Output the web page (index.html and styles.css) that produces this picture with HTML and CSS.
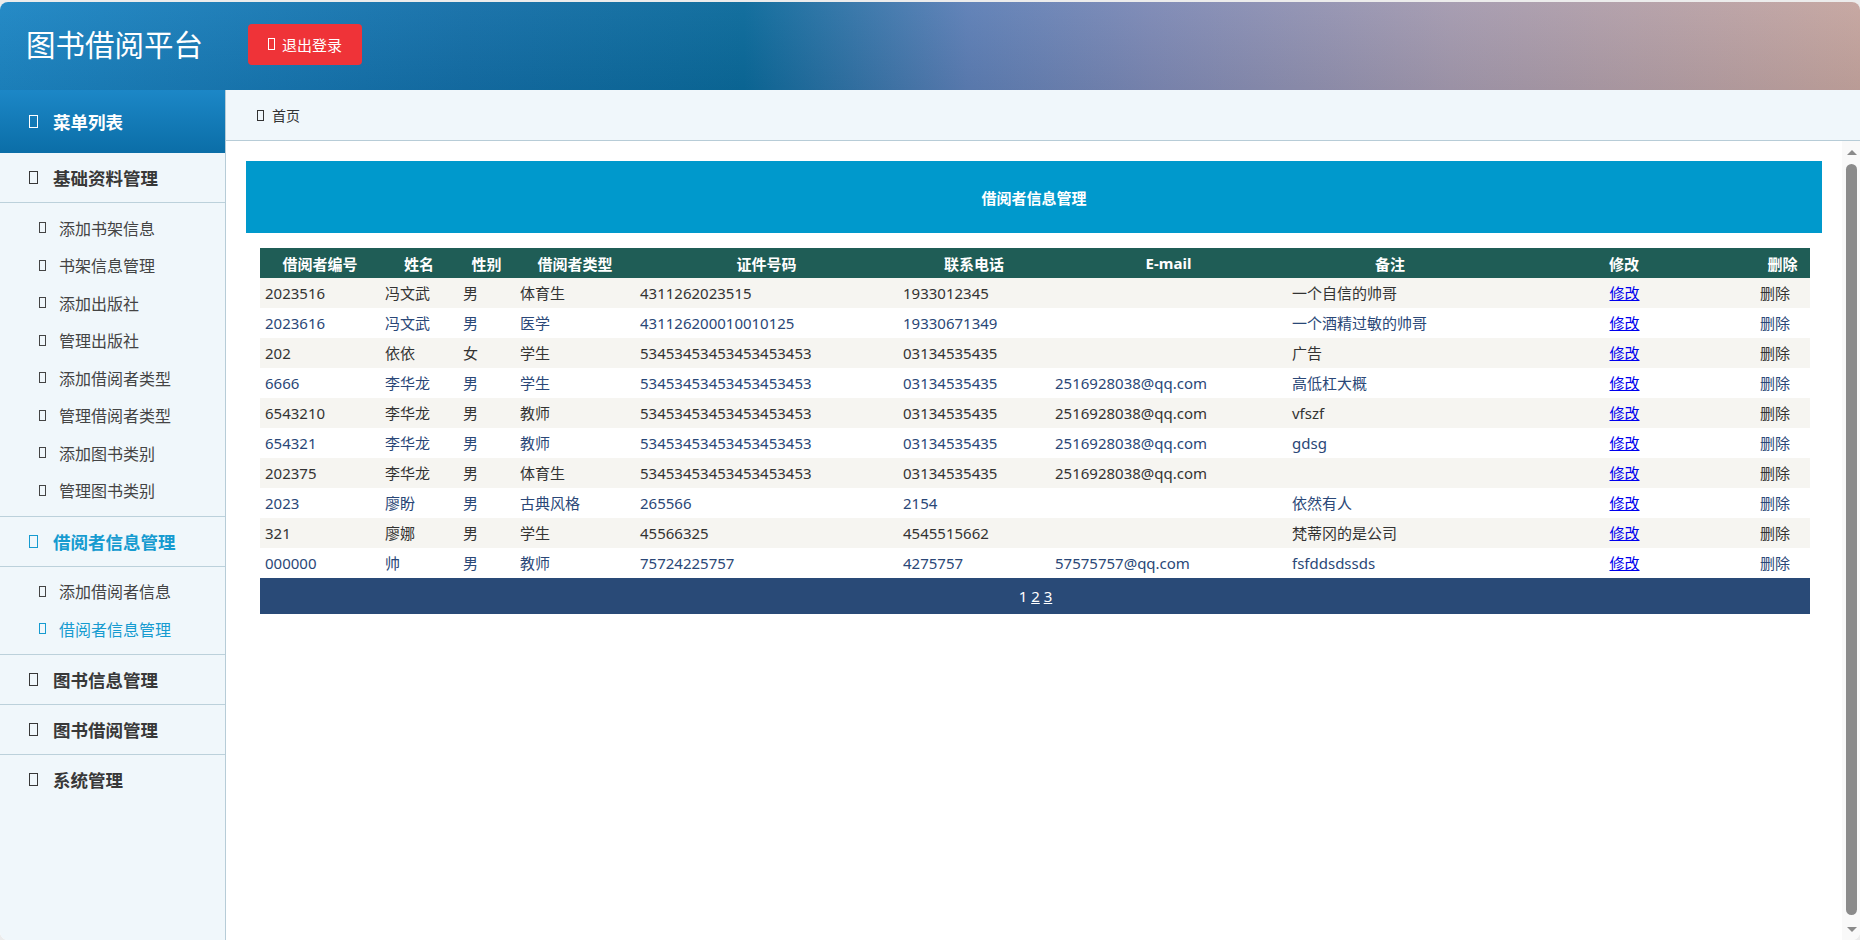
FILE: index.html
```html
<!DOCTYPE html>
<html lang="zh-CN">
<head>
<meta charset="utf-8">
<title>图书借阅平台</title>
<link rel="stylesheet" href="styles.css">
</head>
<body>
<div class="app">
  <header class="topbar">
    <h1 class="brand">图书借阅平台</h1>
    <a class="logout"><span class="ico"></span>退出登录</a>
  </header>
  <div class="body-row">
    <aside class="sidebar">
      <div class="menu-title"><span class="ico ico-lg"></span><span>菜单列表</span></div>
      <div class="group">
        <div class="group-head"><span class="ico ico-lg"></span><span>基础资料管理</span></div>
        <ul class="sub">
          <li><span class="ico"></span>添加书架信息</li>
          <li><span class="ico"></span>书架信息管理</li>
          <li><span class="ico"></span>添加出版社</li>
          <li><span class="ico"></span>管理出版社</li>
          <li><span class="ico"></span>添加借阅者类型</li>
          <li><span class="ico"></span>管理借阅者类型</li>
          <li><span class="ico"></span>添加图书类别</li>
          <li><span class="ico"></span>管理图书类别</li>
        </ul>
      </div>
      <div class="group">
        <div class="group-head active"><span class="ico ico-lg"></span><span>借阅者信息管理</span></div>
        <ul class="sub">
          <li><span class="ico"></span>添加借阅者信息</li>
          <li class="active"><span class="ico"></span>借阅者信息管理</li>
        </ul>
      </div>
      <div class="group">
        <div class="group-head"><span class="ico ico-lg"></span><span>图书信息管理</span></div>
      </div>
      <div class="group">
        <div class="group-head"><span class="ico ico-lg"></span><span>图书借阅管理</span></div>
      </div>
      <div class="group last">
        <div class="group-head"><span class="ico ico-lg"></span><span>系统管理</span></div>
      </div>
    </aside>
    <main class="main">
      <div class="crumb"><span class="ico"></span>首页</div>
      <div class="scroll-row">
        <div class="content">
          <div class="panel-title">借阅者信息管理</div>
          <table class="grid">
            <colgroup>
              <col class="w1"><col class="w2"><col class="w3"><col class="w4"><col class="w5">
              <col class="w6"><col class="w7"><col class="w8"><col class="w9"><col class="w10">
            </colgroup>
            <thead>
              <tr><th>借阅者编号</th><th>姓名</th><th>性别</th><th>借阅者类型</th><th>证件号码</th><th>联系电话</th><th>E-mail</th><th>备注</th><th>修改</th><th>删除</th></tr>
            </thead>
            <tbody>
              <tr><td>2023516</td><td>冯文武</td><td>男</td><td>体育生</td><td>4311262023515</td><td>1933012345</td><td></td><td>一个自信的帅哥</td><td class="c"><a href="#">修改</a></td><td>删除</td></tr>
              <tr><td>2023616</td><td>冯文武</td><td>男</td><td>医学</td><td>431126200010010125</td><td>19330671349</td><td></td><td>一个酒精过敏的帅哥</td><td class="c"><a href="#">修改</a></td><td>删除</td></tr>
              <tr><td>202</td><td>依依</td><td>女</td><td>学生</td><td>53453453453453453453</td><td>03134535435</td><td></td><td>广告</td><td class="c"><a href="#">修改</a></td><td>删除</td></tr>
              <tr><td>6666</td><td>李华龙</td><td>男</td><td>学生</td><td>53453453453453453453</td><td>03134535435</td><td>2516928038@qq.com</td><td>高低杠大概</td><td class="c"><a href="#">修改</a></td><td>删除</td></tr>
              <tr><td>6543210</td><td>李华龙</td><td>男</td><td>教师</td><td>53453453453453453453</td><td>03134535435</td><td>2516928038@qq.com</td><td>vfszf</td><td class="c"><a href="#">修改</a></td><td>删除</td></tr>
              <tr><td>654321</td><td>李华龙</td><td>男</td><td>教师</td><td>53453453453453453453</td><td>03134535435</td><td>2516928038@qq.com</td><td>gdsg</td><td class="c"><a href="#">修改</a></td><td>删除</td></tr>
              <tr><td>202375</td><td>李华龙</td><td>男</td><td>体育生</td><td>53453453453453453453</td><td>03134535435</td><td>2516928038@qq.com</td><td></td><td class="c"><a href="#">修改</a></td><td>删除</td></tr>
              <tr><td>2023</td><td>廖盼</td><td>男</td><td>古典风格</td><td>265566</td><td>2154</td><td></td><td>依然有人</td><td class="c"><a href="#">修改</a></td><td>删除</td></tr>
              <tr><td>321</td><td>廖娜</td><td>男</td><td>学生</td><td>45566325</td><td>4545515662</td><td></td><td>梵蒂冈的是公司</td><td class="c"><a href="#">修改</a></td><td>删除</td></tr>
              <tr><td>000000</td><td>帅</td><td>男</td><td>教师</td><td>75724225757</td><td>4275757</td><td>57575757@qq.com</td><td>fsfddsdssds</td><td class="c"><a href="#">修改</a></td><td>删除</td></tr>
            </tbody>
            <tfoot>
              <tr><td colspan="10" class="pager">1 <a href="#">2</a> <a href="#">3</a></td></tr>
            </tfoot>
          </table>
        </div>
        <div class="vscroll">
          <span class="arrow up"></span>
          <span class="thumb"></span>
          <span class="arrow down"></span>
        </div>
      </div>
    </main>
  </div>
</div>
</body>
</html>
```
FILE: styles.css
```css
* { box-sizing: border-box; }
html, body { margin: 0; padding: 0; height: 100%; }
body {
  background: #ececec;
  font-family: "Noto Sans", "Noto Sans CJK SC", sans-serif;
  color: #333;
  overflow: hidden;
}
.app {
  margin-top: 2px;
  height: calc(100vh - 2px);
  border-radius: 8px;
  overflow: hidden;
  display: flex;
  flex-direction: column;
  background: #fff;
}
.ico {
  display: inline-block;
  width: 7px;
  height: 11px;
  border: 1px solid currentColor;
  vertical-align: -1px;
  margin-right: 13px;
}
.ico-lg { width: 9px; height: 13px; margin-right: 15px; }

/* top bar */
.topbar {
  height: 88px;
  flex: none;
  display: flex;
  align-items: center;
  padding: 0 0 4px 26px;
  background:
    linear-gradient(to bottom, rgba(255,255,255,0.04), rgba(0,0,0,0.06)),
    linear-gradient(to right, #1d86c4 0%, #146fa8 25%, #0b6a9b 40%, #5d7fb6 52%, #7d89b5 62%, #a49aaf 78%, #c5a59f 100%);
}
.brand {
  margin: 0;
  font-family: "Noto Sans CJK SC", sans-serif;
  font-weight: 400;
  font-size: 29.5px;
  line-height: 1;
  color: #fff;
}
.logout {
  margin-left: 45px;
  height: 41px;
  width: 114px;
  display: flex;
  align-items: center;
  justify-content: center;
  background: #ef3338;
  border-radius: 4px;
  color: #fff;
  font-size: 15px;
  font-family: "Noto Sans CJK SC", sans-serif;
}
.logout .ico { width: 7px; height: 12px; margin-right: 7px; vertical-align: 0; }

.body-row { flex: 1; display: flex; min-height: 0; }

/* sidebar */
.sidebar {
  width: 226px;
  flex: none;
  background: #f0f7fb;
  border-right: 1px solid #b7ccd7;
  font-family: "Noto Sans CJK SC", sans-serif;
}
.menu-title {
  height: 63px;
  display: flex;
  align-items: center;
  padding-left: 29px;
  color: #fff;
  font-weight: 700;
  font-size: 17.5px;
  background: linear-gradient(to bottom, #1c87c7, #0b6ea7);
}
.group { border-bottom: 1px solid #bcd1db; }
.group.last { border-bottom: 0; }
.group-head {
  height: 49px;
  display: flex;
  align-items: center;
  padding-left: 29px;
  font-weight: 700;
  font-size: 17.5px;
  color: #383838;
}
.group-head.active { color: #169bd0; }
.sub {
  list-style: none;
  margin: 0;
  padding: 6px 0 6.5px;
  border-top: 1px solid #bcd1db;
}
.sub li {
  height: 37.5px;
  display: flex;
  align-items: center;
  padding-left: 39px;
  font-size: 16px;
  color: #444;
}
.sub li .ico { margin-right: 13px; }
.sub li.active { color: #169bd0; }

/* main */
.main {
  flex: 1;
  min-width: 0;
  display: flex;
  flex-direction: column;
}
.crumb {
  height: 51px;
  flex: none;
  display: flex;
  align-items: center;
  padding-left: 31px;
  background: #f0f7fb;
  border-bottom: 1px solid #b7ccd7;
  font-family: "Noto Sans CJK SC", sans-serif;
  font-size: 14px;
  color: #333;
}
.crumb .ico { width: 7px; height: 11px; margin-right: 8px; }
.scroll-row { flex: 1; display: flex; min-height: 0; }
.content { flex: 1; padding: 20px 20px 0 20px; }
.panel-title {
  height: 72px;
  display: flex;
  align-items: center;
  justify-content: center;
  background: #0099cc;
  color: #fff;
  font-weight: 700;
  font-size: 15px;
  font-family: "Noto Sans CJK SC", sans-serif;
}
.grid {
  margin: 15px 12px 0 14px;
  width: calc(100% - 26px);
  border-collapse: collapse;
  table-layout: fixed;
  font-size: 15px;
}
.w1 { width: 120px; } .w2 { width: 78px; } .w3 { width: 57px; } .w4 { width: 120px; }
.w5 { width: 263px; } .w6 { width: 152px; } .w7 { width: 237px; } .w8 { width: 206px; }
.w9 { width: 262px; } .w10 { width: 55px; }
.grid th {
  height: 30px;
  padding: 0;
  background: #1f5d56;
  color: #fff;
  font-weight: 700;
  font-size: 15px;
  text-align: center;
  white-space: nowrap;
}
.grid td {
  height: 30px;
  padding: 0 4px 0 5px;
  line-height: 20px;
  white-space: nowrap;
  overflow: hidden;
}
.grid tbody tr:nth-child(odd) { background: #f6f5f1; color: #333; }
.grid tbody tr:nth-child(even) { background: #fff; color: #2a4777; }
.grid td.c { text-align: center; }
.grid td a { color: #0000ee; text-decoration: underline; }
.grid td.pager {
  height: 36px;
  background: #294a77;
  color: #fff;
  text-align: center;
  font-size: 15px;
}
.grid td.pager a { color: #fff; }

/* fake scrollbar */
.vscroll {
  width: 19px;
  flex: none;
  background: #f9f9f9;
  display: flex;
  flex-direction: column;
  align-items: center;
  padding: 9px 0 8px;
}
.arrow { width: 0; height: 0; border-left: 5.5px solid transparent; border-right: 5.5px solid transparent; }
.arrow.up { border-bottom: 5px solid #8a8a8a; }
.arrow.down { border-top: 5px solid #8a8a8a; }
.thumb {
  flex: 1;
  width: 11px;
  margin: 9px 0 12px;
  background: #8b8b8b;
  border-radius: 6px;
}
```
